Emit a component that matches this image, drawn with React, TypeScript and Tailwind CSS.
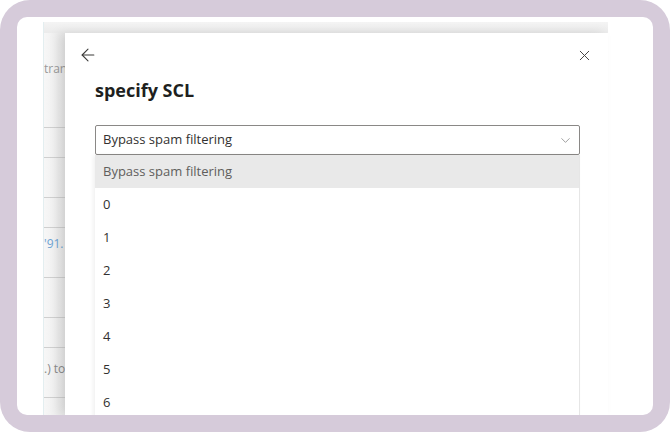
import React from "react";
import { ArrowLeft, X, ChevronDown } from "lucide-react";

const options = ["0", "1", "2", "3", "4", "5", "6"];

// rows of the page behind the panel: [height, text, colour]
const behindRows: [number, string, string][] = [
    [95, "tran", "text-[#9a9a9a]"],
    [30, "", ""],
    [40, "", ""],
    [30, "", ""],
    [50, "'91.", "text-[#6ea3d3]"],
    [40, "", ""],
    [30, "", ""],
    [50, ".) to", "text-[#8a8a8a]"],
    [40, "", ""],
];

export default function App() {
    return (
        <div className="w-[670px] h-[432px] bg-white" style={{ fontFamily: '"Open Sans", "Noto Sans", sans-serif' }}>
            <div className="w-full h-full rounded-[30px] bg-[#d6cbda] p-[17px]">
                <div className="h-full bg-white rounded-[10px] overflow-hidden pl-[26px] pr-[45px] pt-[5px] flex flex-col">
                    {/* top strip of the page behind */}
                    <div className="h-[11px] flex-none bg-gradient-to-b from-[#f4f4f4] to-[#ebebeb] border-l border-[#e3eef0]" />

                    <div className="flex-1 flex min-h-0">
                        {/* left strip of the page behind */}
                        <div className="w-[22px] flex-none bg-gradient-to-r from-[#f7f7f7] to-[#e9e9e9] border-l border-[#e3eef0] overflow-hidden">
                            {behindRows.map(([h, text, color], i) => (
                                <div
                                    key={i}
                                    className={`border-b border-[#cfcfcf] whitespace-nowrap text-[12px] leading-none ${color}`}
                                    style={{ height: h }}
                                >
                                    {text && (
                                        <div className={i === 0 ? "pt-[30px]" : i === 4 ? "pt-[10px]" : "pt-[15px]"}>{text}</div>
                                    )}
                                </div>
                            ))}
                        </div>

                        {/* panel */}
                        <div className="flex-1 bg-white relative z-10 shadow-[-6px_0_10px_rgba(0,0,0,0.10)] pl-[30px] pr-[28px]">
                            <div className="flex items-center justify-between h-[16px] mt-[14px] -ml-[17px] -mr-[13px]">
                                <ArrowLeft size={20} strokeWidth={1.3} className="text-[#3b3a39]" />
                                <X size={17} strokeWidth={1.4} className="text-[#484644]" />
                            </div>

                            <h2 className="mt-[15px] text-[18px] leading-[24px] font-bold text-[#201f1e]">specify SCL</h2>

                            <div className="mt-[23px] h-[30px] border border-[#8a8886] rounded-[2px] flex items-center justify-between pl-[7px] pr-[6px]">
                                <span className="text-[13px] text-[#323130]">Bypass spam filtering</span>
                                <ChevronDown size={15} strokeWidth={1} className="text-[#666]" />
                            </div>

                            <div className="border-r border-[#e6e6e6] shadow-[-2px_0_4px_rgba(0,0,0,0.06)]">
                                <div className="h-[33px] bg-[#e9e9e9] flex items-center pl-[8px] text-[13px] text-[#605e5c]">
                                    Bypass spam filtering
                                </div>
                                {options.map((o) => (
                                    <div key={o} className="h-[33px] flex items-center pl-[8px] text-[13px] text-[#323130]">
                                        {o}
                                    </div>
                                ))}
                            </div>
                        </div>
                    </div>
                </div>
            </div>
        </div>
    );
}
